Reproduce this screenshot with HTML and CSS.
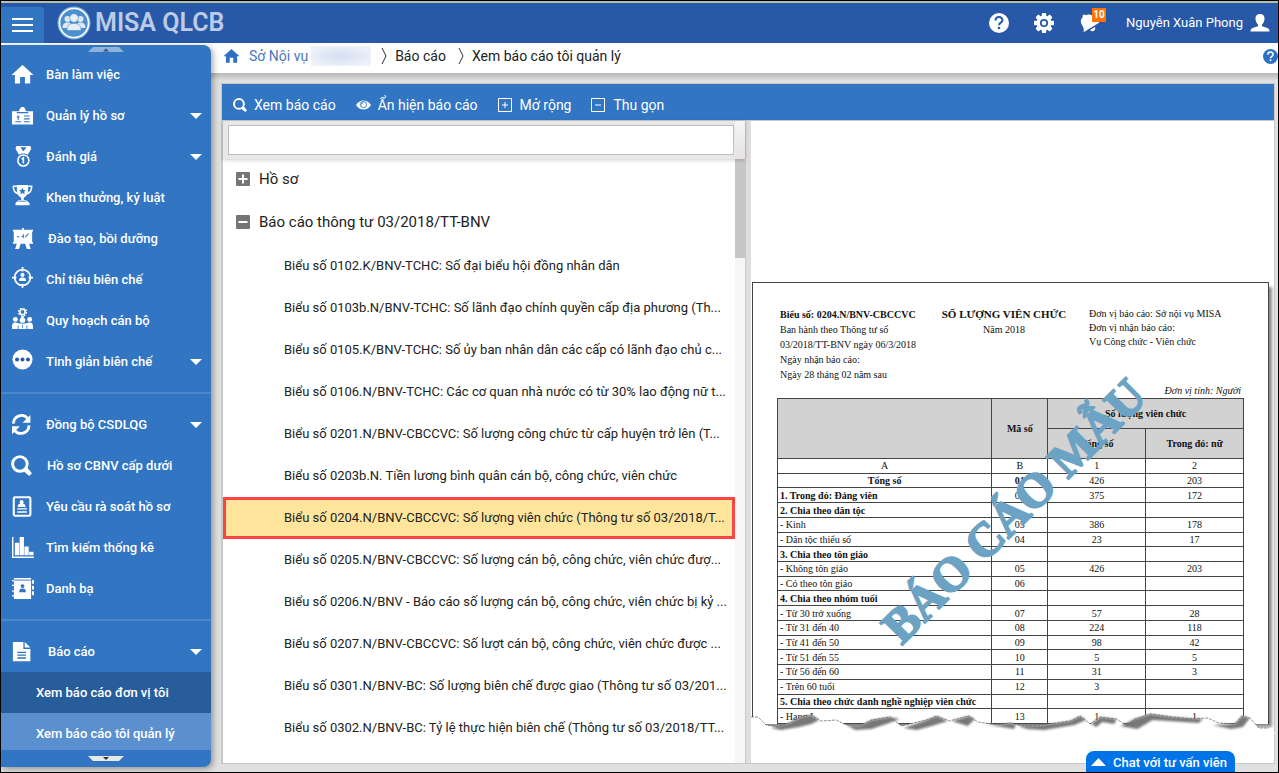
FILE: index.html
```html
<!DOCTYPE html>
<html lang="vi">
<head>
<meta charset="utf-8">
<title>MISA QLCB</title>
<link rel="stylesheet" href="styles.css">
</head>
<body>
<svg class="sprite" aria-hidden="true">
  <symbol id="home" viewBox="0 0 24 20"><path d="M12 0 23.5 10.500H20V19.500H14.500V12.500H9.500V19.500H4V10.500H.5z"/></symbol>
  <symbol id="caret" viewBox="0 0 12 6"><path d="M0 0H12L6 6z"/></symbol>
  <symbol id="search" viewBox="0 0 20 20"><circle cx="8.500" cy="8.500" r="7" fill="none" stroke="currentColor" stroke-width="2.800"/><path d="M11.500 15 15 11.500 20 17.500 17.500 20z"/></symbol>
</svg>
<div class="app">
  <header class="topbar">
    <button class="menu-btn" aria-label="Menu"><span></span><span></span><span></span></button>
    <a class="brand" href="#">
      <svg class="brand-logo" viewBox="0 0 34 34"><circle cx="17" cy="17" r="16.500" fill="#7fb2dc"/><circle cx="17" cy="17" r="14.500" fill="#4a90cf" stroke="#fff" stroke-width="1.600"/><g fill="#dfe8f3"><circle cx="10.500" cy="13" r="3"/><circle cx="23.500" cy="13" r="3"/><path d="M5.500 22c0-4 2-5.500 5-5.500S15 18 15 22zM19 22c0-4 1.500-5.500 4.500-5.500s5 1.500 5 5.500z"/></g><g fill="#e8eef6" stroke="#4a90cf" stroke-width=".6"><path d="M10 24.500c0-5 2-7 7-7s7 2 7 7z"/><circle cx="17" cy="12" r="4.300"/></g></svg>
      <span>MISA QLCB</span>
    </a>
    <div class="top-actions">
      <button aria-label="Trợ giúp"><svg width="20" height="20" viewBox="0 0 20 20"><circle cx="10" cy="10" r="10"/><path d="M6.500 7.500C6.500 3 13.500 3 13.500 7.300 13.500 9.800 10 9.600 10 12.300" fill="none" stroke="#2859a8" stroke-width="2"/><circle cx="10" cy="15" r="1.300" fill="#2859a8"/></svg></button>
      <button aria-label="Thiết lập"><svg width="22" height="22" viewBox="-11 -11 22 22"><rect x="-2.200" y="-10" width="4.400" height="20" rx="1"/><rect x="-2.200" y="-10" width="4.400" height="20" rx="1" transform="rotate(45)"/><rect x="-2.200" y="-10" width="4.400" height="20" rx="1" transform="rotate(90)"/><rect x="-2.200" y="-10" width="4.400" height="20" rx="1" transform="rotate(135)"/><circle r="7.400"/><circle r="3.200" fill="none" stroke="#2859a8" stroke-width="1.800"/></svg></button>
      <button class="bell" aria-label="Thông báo"><svg width="20" height="20" viewBox="0 0 20 20"><g transform="rotate(-32 10 10)"><path d="M9.500 0c1 0 1.700.8 1.700 1.600C15.500 2.500 17 5 17 8c0 4 .8 5 2.500 7H.5C2.200 13 3 12 3 8c0-3 1.200-5.500 5-6.400C8 .8 8.700 0 9.500 0z"/><path d="M7 16.500h6c-.5 3.500-5.500 3.500-6 0z"/></g></svg><span class="badge">10</span></button>
      <button class="user">Nguyễn Xuân Phong <svg width="20" height="18" viewBox="0 0 20 18"><path d="M10 0C6.500 0 5.300 2.500 5.500 5c.2 2.600 1.200 4.400 2.500 5.400v1.800L2.500 14C.8 14.800.5 16 .5 17.500h19c0-1.500-.3-2.700-2-3.500L12 12.200v-1.800c1.300-1 2.300-2.800 2.500-5.400C14.700 2.500 13.500 0 10 0z"/></svg></button>
    </div>
  </header>

  <div class="main">
    <nav class="sidebar">
      <button class="scroll-tab up" aria-label="Cuộn lên"><svg width="36" height="5" viewBox="0 0 36 5"><path d="M5 0H31L36 5H0z" fill="#8db2dd"/><path d="M15 4.500 18 1.500 21 4.500z" fill="#3a5070"/></svg></button>
      <div class="nav-list">
        <a class="nav-item" href="#"><svg viewBox="0 0 24 20"><use href="#home"/></svg><span>Bàn làm việc</span></a>
        <a class="nav-item" href="#"><svg viewBox="0 0 24 20"><path d="M1 5.500H8.500V4.500C8.500 3.500 9.500 3.500 9.500 3 9.500.5 14.500.5 14.500 3c0 .5 1 .5 1 1.500v1H23V19.500H1z"/><path d="M6 7h12M13.500 10.500h6M13.500 13.500h6M4.500 16.500h6M13.500 16.500h6M7.500 10v5M6 11.500h3" stroke="#3175c3" stroke-width="1.100"/></svg><span>Quản lý hồ sơ</span><svg class="caret"><use href="#caret"/></svg></a>
        <a class="nav-item" href="#"><svg viewBox="0 0 24 24"><path d="M5 0h4l4 6 4-6h4l1 3-4 7-3-1.500h-4L8 10 4 3z"/><path d="M9.500 1h7L13 6z" fill="#3175c3"/><path d="M9 0h8v1.500H9z"/><circle cx="13" cy="16.500" r="6.300" fill="#3175c3" stroke="#fff" stroke-width="1.800"/><path d="M11 15 13 13.500v6.500" fill="none" stroke="#fff" stroke-width="1.800"/></svg><span>Đánh giá</span><svg class="caret"><use href="#caret"/></svg></a>
        <a class="nav-item trophy" href="#"><svg viewBox="0 0 24 24"><path d="M5.500 0h13v4c0 5-1.500 9-5 10.500V17h2.500l4 3.500V23H4v-2.500L8 17h2.500v-2.500C7 13 5.500 9 5.500 4z"/><path d="M7.500 18.500h9" stroke="#3175c3" stroke-width="1"/><path d="M5.500 1.500H1.500c0 5 1.500 7.500 5.500 8.500M18.500 1.500h4c0 5-1.500 7.500-5.500 8.500" fill="none" stroke="#fff" stroke-width="1.800"/><path d="m12 3 1.200 2.600 2.800.3-2.100 1.900.6 2.800-2.500-1.500-2.500 1.500.6-2.800L8 5.900l2.800-.3z" fill="#3175c3"/></svg><span>Khen thưởng, kỷ luật</span></a>
        <a class="nav-item indent-s" href="#"><svg viewBox="0 0 24 24"><path d="M11.500 0h2v2H24v2h-1v12h1v2h-4.500l2 6H17l-2-6h-5l-2 6H3.500l2-6H1v-2h1V4H1V2h10.500z"/><path d="M5.500 10h3M11 9l2 1.500V7M15 10.500l4-4" fill="none" stroke="#3175c3" stroke-width="1.200"/></svg><span>Đào tạo, bồi dưỡng</span></a>
        <a class="nav-item trophy" href="#"><svg viewBox="0 0 24 24"><circle cx="12" cy="12" r="9" fill="none" stroke="#fff" stroke-width="2"/><path d="M12 0v5M12 19v5M0 12h5M19 12h5" stroke="#fff" stroke-width="2"/><circle cx="12" cy="9" r="2.300"/><path d="M8 16c0-3 1-4 4-4s4 1 4 4z"/></svg><span>Chỉ tiêu biên chế</span></a>
        <a class="nav-item trophy" href="#"><svg viewBox="0 0 24 24"><circle cx="12" cy="4.500" r="3" fill="none" stroke="#fff" stroke-width="1.800"/><circle cx="12" cy="4.500" r="4.600" fill="none" stroke="#fff" stroke-width="1.500" stroke-dasharray="2 1.600"/><circle cx="3.800" cy="13" r="2.800"/><circle cx="20.200" cy="13" r="2.800"/><circle cx="12" cy="14" r="3.200"/><path d="M0 22c0-4 1-5.500 4-5.500s3.500 1 3.500 1S9 18 12 18s4.500-.5 4.500-.5 1-1 3.700-1c2.800 0 3.800 1.500 3.800 5.500v2H0zM10.500 9h3v3h-3z"/><path d="M7 20v4M17 20v4M12 19.500v3" stroke="#3175c3"/></svg><span>Quy hoạch cán bộ</span></a>
        <a class="nav-item trophy" href="#"><svg viewBox="0 0 24 24"><circle cx="12" cy="12" r="11.500"/><g fill="#2859a8"><circle cx="5.800" cy="12" r="2.300"/><circle cx="12" cy="12" r="2.300"/><circle cx="18.200" cy="12" r="2.300"/></g></svg><span>Tinh giản biên chế</span><svg class="caret"><use href="#caret"/></svg></a>
        <hr>
        <a class="nav-item" href="#"><svg viewBox="0 0 24 24"><path d="M1.500 11C2 1.500 13.500-1.500 18 5.500M19.500 13C19 22.500 7.500 25 3 18.500" fill="none" stroke="#fff" stroke-width="3.200"/><path d="M21 1v9h-9zM0 23v-9h9z"/></svg><span>Đồng bộ CSDLQG</span><svg class="caret"><use href="#caret"/></svg></a>
        <a class="nav-item indent-xs" href="#"><svg viewBox="0 0 22 20"><use href="#search" width="20" height="20"/></svg><span>Hồ sơ CBNV cấp dưới</span></a>
        <a class="nav-item" href="#"><svg viewBox="0 0 24 24"><rect x="2" y="1.500" width="19" height="21" rx="1.500" fill="none" stroke="#fff" stroke-width="2.400"/><circle cx="11" cy="7" r="2.300"/><path d="M6.500 12.500c0-3 1.500-4 4.500-4s4.500 1 4.500 4zM6 14h11v1.500H6zM6 17.500h11V19H6z"/></svg><span>Yêu cầu rà soát hồ sơ</span></a>
        <a class="nav-item" href="#"><svg viewBox="0 0 24 22"><path d="M1 0h1.500v20.500H24V22H1zM4 6h4.500v13H4zM9 0h4.500v19H9zM14 10h4.500v9H14zM19 15.500h4.500V19H19z"/></svg><span>Tìm kiếm thống kê</span></a>
        <a class="nav-item" href="#"><svg viewBox="0 0 24 22"><path d="M3 0h18v22H3zM1 2h4v1.500H1zM1 7h4v1.500H1zM1 13h4v1.500H1zM1 18h4v1.500H1zM22 2h2v4h-2zM22 8h2v4h-2zM22 14h2v4h-2z"/><path d="M3 2.200h18" stroke="#3175c3" stroke-width="1"/><circle cx="12" cy="8.500" r="2" fill="#3175c3"/><path d="M8.500 15c0-3 1-4 3.500-4s3.500 1 3.500 4z" fill="#3175c3"/></svg><span>Danh bạ</span></a>
        <hr>
        <a class="nav-item indent-s" href="#"><svg viewBox="0 0 24 24"><path d="M1 1h12v8h8v14H1zM14.500 1 21 7.500h-6.500z"/><path d="M6 13h10M6 16.200h10M6 19.400h10" stroke="#3175c3" stroke-width="1.500"/></svg><span>Báo cáo</span><svg class="caret"><use href="#caret"/></svg></a>
        <a class="sub-item" href="#">Xem báo cáo đơn vị tôi</a>
        <a class="sub-item active" href="#">Xem báo cáo tôi quản lý</a>
      </div>
      <button class="scroll-tab down" aria-label="Cuộn xuống"><svg width="36" height="5" viewBox="0 0 36 5"><path d="M0 0H36L31 5H5z" fill="#e8e8e8"/><path d="M15 1H21L18 4z" fill="#333"/></svg></button>
    </nav>

    <main class="content">
      <div class="crumbs">
        <svg class="crumb-home" viewBox="0 0 24 20"><use href="#home"/></svg>
        <a href="#">Sở Nội vụ</a><span class="redacted"></span>
        <svg class="sep" viewBox="0 0 6 18"><path d="M1 1 5 9 1 17" /></svg><span>Báo cáo</span>
        <svg class="sep" viewBox="0 0 6 18"><path d="M1 1 5 9 1 17" /></svg><span>Xem báo cáo tôi quản lý</span>
        <button class="help" aria-label="Trợ giúp"><svg width="15" height="15" viewBox="0 0 20 20"><circle cx="10" cy="10" r="10" fill="#2c70c4"/><path d="M6.500 7.500C6.500 3 13.500 3 13.500 7.300 13.500 9.800 10 9.600 10 12.300" fill="none" stroke="#fff" stroke-width="2"/><circle cx="10" cy="15" r="1.300" fill="#fff"/></svg></button>
      </div>

      <section class="panel">
        <div class="toolbar">
          <button><svg width="14" height="14" viewBox="0 0 20 20"><use href="#search"/></svg>Xem báo cáo</button>
          <button><svg width="15" height="10" viewBox="0 0 16 10"><path d="M0 5C4-1.500 12-1.500 16 5 12 11.500 4 11.500 0 5z"/><circle cx="8" cy="4.500" r="3.300" fill="none" stroke="#3175c3" stroke-width="1"/><path d="M8 2.500A2 2 0 0 0 6 4.500" fill="none" stroke="#3175c3"/></svg>Ẩn hiện báo cáo</button>
          <button class="boxed"><svg width="14" height="14" viewBox="0 0 14 14"><path d="M.5.5h13v13H.5zM4 7h6M7 4v6" fill="none" stroke="#fff"/></svg>Mở rộng</button>
          <button class="boxed"><svg width="14" height="14" viewBox="0 0 14 14"><path d="M.5.5h13v13H.5zM4 7h6" fill="none" stroke="#fff"/></svg>Thu gọn</button>
        </div>
        <div class="split">
          <div class="list-pane">
            <div class="search-row"><input type="text" aria-label="Tìm báo cáo"><span></span></div>
            <div class="list-body">
              <div class="tree">
                <button class="group"><svg width="14" height="14" viewBox="0 0 14 14"><rect width="14" height="14" rx="1" fill="#757575"/><path d="M2.500 7h9M7 2.500v9" stroke="#fff" stroke-width="2"/></svg>Hồ sơ</button>
                <button class="group"><svg width="14" height="14" viewBox="0 0 14 14"><rect width="14" height="14" rx="1" fill="#757575"/><path d="M2.500 7h9" stroke="#fff" stroke-width="2"/></svg>Báo cáo thông tư 03/2018/TT-BNV</button>
                <a class="report" href="#">Biểu số 0102.K/BNV-TCHC: Số đại biểu hội đồng nhân dân</a>
                <a class="report" href="#">Biểu số 0103b.N/BNV-TCHC: Số lãnh đạo chính quyền cấp địa phương (Th...</a>
                <a class="report" href="#">Biểu số 0105.K/BNV-TCHC: Số ủy ban nhân dân các cấp có lãnh đạo chủ c...</a>
                <a class="report" href="#">Biểu số 0106.N/BNV-TCHC: Các cơ quan nhà nước có từ 30% lao động nữ t...</a>
                <a class="report" href="#">Biểu số 0201.N/BNV-CBCCVC: Số lượng công chức từ cấp huyện trở lên (T...</a>
                <a class="report" href="#">Biểu số 0203b.N. Tiền lương bình quân cán bộ, công chức, viên chức</a>
                <a class="report selected" href="#">Biểu số 0204.N/BNV-CBCCVC: Số lượng viên chức (Thông tư số 03/2018/T...</a>
                <a class="report" href="#">Biểu số 0205.N/BNV-CBCCVC: Số lượng cán bộ, công chức, viên chức đượ...</a>
                <a class="report" href="#">Biểu số 0206.N/BNV - Báo cáo số lượng cán bộ, công chức, viên chức bị kỷ ...</a>
                <a class="report" href="#">Biểu số 0207.N/BNV-CBCCVC: Số lượt cán bộ, công chức, viên chức được ...</a>
                <a class="report" href="#">Biểu số 0301.N/BNV-BC: Số lượng biên chế được giao (Thông tư số 03/201...</a>
                <a class="report" href="#">Biểu số 0302.N/BNV-BC: Tỷ lệ thực hiện biên chế (Thông tư số 03/2018/TT...</a>
              </div>
              <div class="scrollbar"><span></span></div>
            </div>
          </div>
          <div class="splitter"></div>
          <div class="preview">
            <article class="sheet">
              <div class="sheet-head">
                <div><strong>Biểu số: 0204.N/BNV-CBCCVC</strong><br>Ban hành theo Thông tư số<br>03/2018/TT-BNV ngày 06/3/2018<br>Ngày nhận báo cáo:<br>Ngày 28 tháng 02 năm sau</div>
                <div class="title"><strong>SỐ LƯỢNG VIÊN CHỨC</strong><br>Năm 2018</div>
                <div class="receiver">Đơn vị báo cáo: Sở nội vụ MISA<br>Đơn vị nhận báo cáo:<br>Vụ Công chức - Viên chức</div>
              </div>
              <p class="unit">Đơn vị tính: Người</p>
              <table>
                <colgroup><col class="c1"><col class="c2"><col class="c3"><col class="c4"></colgroup>
                <thead>
                  <tr><th rowspan="2"></th><th rowspan="2">Mã số</th><th colspan="2">Số lượng viên chức</th></tr>
                  <tr><th>Tổng số</th><th>Trong đó: nữ</th></tr>
                </thead>
                <tbody>
                  <tr><td class="mid">A</td><td>B</td><td>1</td><td>2</td></tr>
                  <tr><td class="mid b">Tổng số</td><td class="b">01</td><td>426</td><td>203</td></tr>
                  <tr><td class="b">1. Trong đó: Đảng viên</td><td>02</td><td>375</td><td>172</td></tr>
                  <tr><td class="b">2. Chia theo dân tộc</td><td></td><td></td><td></td></tr>
                  <tr><td>- Kinh</td><td>03</td><td>386</td><td>178</td></tr>
                  <tr><td>- Dân tộc thiểu số</td><td>04</td><td>23</td><td>17</td></tr>
                  <tr><td class="b">3. Chia theo tôn giáo</td><td></td><td></td><td></td></tr>
                  <tr><td>- Không tôn giáo</td><td>05</td><td>426</td><td>203</td></tr>
                  <tr><td>- Có theo tôn giáo</td><td>06</td><td></td><td></td></tr>
                  <tr><td class="b">4. Chia theo nhóm tuổi</td><td></td><td></td><td></td></tr>
                  <tr><td>- Từ 30 trở xuống</td><td>07</td><td>57</td><td>28</td></tr>
                  <tr><td>- Từ 31 đến 40</td><td>08</td><td>224</td><td>118</td></tr>
                  <tr><td>- Từ 41 đến 50</td><td>09</td><td>98</td><td>42</td></tr>
                  <tr><td>- Từ 51 đến 55</td><td>10</td><td>5</td><td>5</td></tr>
                  <tr><td>- Từ 56 đến 60</td><td>11</td><td>31</td><td>3</td></tr>
                  <tr><td>- Trên 60 tuổi</td><td>12</td><td>3</td><td></td></tr>
                  <tr><td class="b">5. Chia theo chức danh nghề nghiệp viên chức</td><td></td><td></td><td></td></tr>
                  <tr><td>- Hạng I</td><td>13</td><td>1</td><td>1</td></tr>
                </tbody>
              </table>
              <div class="watermark">BÁO CÁO MẪU</div>
              <svg class="tear" viewBox="0 0 522 24" preserveAspectRatio="none">
                <defs><filter id="soft"><feGaussianBlur stdDeviation="1"/></filter></defs>
                <path d="M0 24V7L7 7 15 15 26 17 38 13 50 7 60 5 70 11 85 10 95 15 108 16 120 10 138 7 150 16 162 13 175 10 185 6 198 11 208 8 217 6 226 12 246 15 258 13 270 16 290 15 305 13 318 11 328 6 338 14 348 7 364 9 375 16 382 9 398 4 420 7 438 9 455 8 466 13 482 14 489 6 497 8 506 18 520 18 522 24z" fill="#fff"/>
                <path d="M20 18 38 13 50 7 60 5 68 10 60 14 48 17 30 20zM95 15 108 16 120 10 138 7 148 9 135 14 120 19 104 20zM152 18 175 10 185 6 196 11 180 16 165 20zM200 11 217 6 223 9 216 16zM232 14 246 15 258 13 264 15 262 19 250 17zM266 16 290 15 318 11 328 6 334 10 322 15 292 20 275 19zM339 14 348 7 364 9 362 14 350 12 344 17zM368 16 382 9 398 4 420 7 450 9 446 13 400 10 385 19zM460 15 482 14 489 6 497 8 490 17 478 19z" fill="#777" filter="url(#soft)"/>
                <path d="M0 7H7L15 15 26 17 38 13 50 7 60 5 70 11 85 10 95 15 108 16 120 10 138 7 150 16 162 13 175 10 185 6 198 11 208 8 217 6 226 12 246 15 258 13 270 16 290 15 305 13 318 11 328 6 338 14 348 7 364 9 375 16 382 9 398 4 420 7 438 9 455 8 466 13 482 14 489 6 497 8 506 18 516 18" fill="none" stroke="#666" stroke-width=".7" stroke-dasharray="3 1"/>
              </svg>
            </article>
          </div>
        </div>
      </section>
    </main>
  </div>
  <button class="chat"><svg width="15" height="8" viewBox="0 0 15 8"><path d="M7.500 0 15 8H0z"/></svg>Chat với tư vấn viên</button>
</div>
</body>
</html>
```
FILE: styles.css
```css
* { box-sizing: border-box; }
body { margin: 0; font-family: Roboto, "Liberation Sans", sans-serif; font-size: 13px; color: #222; }
button { font: inherit; color: inherit; background: none; border: 0; padding: 0; }
a { color: inherit; text-decoration: none; }
svg { fill: currentColor; flex: none; }
.sprite { position: absolute; width: 0; height: 0; }
.app { position: relative; display: flex; flex-direction: column; height: 100vh; border: 1px solid #000; overflow: hidden; }

.topbar { display: flex; align-items: center; flex: none; height: 42px; background: #2859a8; border-top: 2px solid #b5bdb0; color: #fff; }
.menu-btn { display: flex; flex-direction: column; justify-content: center; align-items: center; gap: 4px; width: 43px; height: 36px; align-self: flex-end; background: #3175c3; border-top-right-radius: 4px; }
.menu-btn span { width: 21px; height: 2px; background: #fff; }
.brand { display: flex; align-items: center; gap: 4px; margin-left: 13px; font-size: 25px; line-height: 30px; font-weight: 600; color: #bccbe6; }
.brand-logo { width: 34px; height: 34px; }
.top-actions { display: flex; align-items: center; margin-left: auto; gap: 24px; padding-right: 8px; padding-bottom: 1px; }
.top-actions button { display: flex; align-items: center; }
.bell { position: relative; }
.badge { position: absolute; left: 13px; top: -5px; width: 14px; height: 14px; background: #ff7200; font-size: 10px; font-weight: 700; line-height: 14px; text-align: center; }
.user { gap: 7px; margin-left: 3px; }

.main { display: flex; flex: 1; min-height: 0; background: linear-gradient(#fff 30px, #b8b8b8 30px, #e0e0e0 38px); }
.sidebar { display: flex; flex-direction: column; width: 210px; flex: none; margin: 2px 0 5px; background: #3175c3; border-radius: 0 8px 8px 0; color: #fff; overflow: hidden; box-shadow: 2px 2px 6px rgba(0, 0, 0, .35); }
.scroll-tab { display: flex; justify-content: center; flex: none; }
.scroll-tab.up { height: 9px; padding-top: 2px; }
.scroll-tab.down { height: 17px; padding-top: 6px; }
.nav-list { flex: 1; min-height: 0; overflow: hidden; }
.nav-item { display: flex; align-items: center; height: 41px; padding: 0 9px 0 10px; gap: 12px; font-weight: 500; }
.nav-item > svg { width: 23px; height: 21px; }
.nav-item.trophy > svg:first-child { margin-bottom: 4px; }
.nav-item > .caret { width: 12px; height: 6px; margin-left: auto; }
.nav-item.indent-s { gap: 14px; }
.nav-item.indent-xs { gap: 13px; }
.nav-list hr { height: 2px; margin: 10px 0; border: 0; background: #4b87cd; }
.sub-item { display: flex; align-items: center; height: 41px; padding-left: 35px; background: #285d9c; font-weight: 500; }
.sub-item.active { background: #5b90d0; }

.content { display: flex; flex-direction: column; flex: 1; min-width: 0; padding: 0 3px 8px 10px; }
.crumbs { display: flex; align-items: center; height: 30px; flex: none; padding-left: 2px; padding-bottom: 4px; font-size: 14px; margin-right: -3px; }
.crumbs a { color: #4678be; }
.crumb-home { width: 17px; height: 14px; margin-right: 9px; color: #2f72c4; }
.redacted { width: 60px; height: 20px; margin: 0 10px 0 3px; background: radial-gradient(ellipse at center, #d3dff2, #eef2fa 80%); }
.sep { width: 6px; height: 18px; margin-right: 8px; fill: none; stroke: #333; stroke-width: 1; }
.crumbs .sep ~ .sep { margin-left: 12px; }
.help { display: flex; margin-left: auto; }

.panel { display: flex; flex-direction: column; flex: 1; min-height: 0; margin-top: 10px; border: 1px solid #c8c8c8; background: #fff; }
.toolbar { display: flex; align-items: center; gap: 20px; flex: none; height: 37px; padding: 5px 11px 0; background: #3175c3; color: #fff; border-bottom: 1px solid #c8c8c8; font-size: 14px; }
.toolbar button { display: flex; align-items: center; gap: 7px; }
.toolbar .boxed { gap: 8px; }
.split { display: flex; flex: 1; min-height: 0; }
.list-pane { display: flex; flex-direction: column; width: 524px; flex: none; border-left: 1px solid #c8c8c8; border-right: 1px solid #c8c8c8; }
.search-row { display: flex; flex: none; align-items: center; height: 38px; padding-left: 5px; background: #e8e8e8; position: relative; box-shadow: 0 1px 4px rgba(0, 0, 0, .2); }
.search-row input { flex: 1; min-width: 0; height: 30px; border: 1px solid #bdbdbd; background: #fff; }
.search-row span { width: 10px; height: 38px; margin-left: 1px; background: linear-gradient(#f6f4f4, #e6e2e2); }
.list-body { display: flex; flex: 1; min-height: 0; }
.tree { flex: 1; min-width: 0; overflow: hidden; }
.group { display: flex; align-items: center; gap: 9px; width: 100%; height: 43px; padding: 0 0 3px 13px; font-size: 15px; }
.report { display: block; height: 42px; padding-left: 61px; line-height: 42px; font-size: 13px; white-space: nowrap; overflow: hidden; }
.report.selected { background: #ffe59c; border: 3px solid #fb4444; padding-left: 58px; line-height: 36px; }
.scrollbar { width: 10px; flex: none; background: #f6f6f6; }
.scrollbar span { display: block; height: 99px; background: #c6c6c6; }
.splitter { width: 5px; flex: none; background: #dedede; }
.preview { flex: 1; min-width: 0; padding: 161px 5px 0 1px; }

.sheet { position: relative; height: 442px; padding: 24px 24px 0; border: 1px solid #444; border-bottom: 0; box-shadow: 4px 4px 3px -1px #888; background: #fff; font-family: "Liberation Serif", serif; font-size: 10px; color: #111; }
.sheet-head { display: grid; grid-template-columns: 139px 140px 1fr; gap: 0 15px; padding: 0 0 1px 3px; line-height: 15px; white-space: nowrap; }
.sheet-head .title { text-align: center; }
.title strong { font-size: 11px; }
.receiver { line-height: 14px; }
.unit { margin: 0; padding-right: 3px; text-align: right; font-style: italic; line-height: 15px; }
table { width: 100%; height: 326px; border-collapse: collapse; table-layout: fixed; background: #fff; }
.c1 { width: 46%; }
.c2 { width: 12%; }
.c3, .c4 { width: 21%; }
th, td { border: 1px solid #444; padding: 0 2px; text-align: center; line-height: 13px; }
th { height: 30px; background: #d2d2d2; }
td:first-child { text-align: left; white-space: nowrap; }
td.mid:first-child { text-align: center; }
.b { font-weight: 700; }
.watermark { position: absolute; left: 81px; top: 203px; width: 360px; text-align: center; font-size: 48px; line-height: 50px; font-weight: 700; color: #6ca3c5; -webkit-text-stroke: 2px #6ca3c5; transform: rotate(-45deg); white-space: nowrap; }
.tear { position: absolute; left: -2px; right: -6px; bottom: -10px; width: 524px; height: 24px; }

.chat { position: absolute; right: 43px; bottom: 0; display: flex; align-items: center; gap: 7px; height: 21px; padding: 1px 8px 0 5px; background: #0073e6; color: #fff; border-radius: 8px 8px 0 0; font-weight: 500; }
```
